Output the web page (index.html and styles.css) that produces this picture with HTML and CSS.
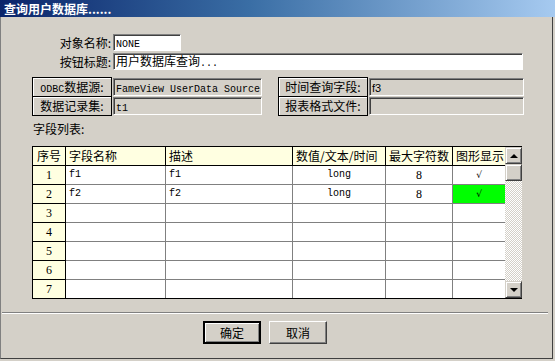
FILE: index.html
```html
<!DOCTYPE html>
<html lang="zh-CN">
<head>
  <meta charset="UTF-8">
  <title>查询用户数据库</title>
  <link rel="stylesheet" href="styles.css">
</head>
<body>
  <div class="window">
    <div class="titlebar">查询用户数据库......</div>
    <div class="client">
      <div class="row row-first">
        <span class="label">对象名称:</span>
        <div class="input input-short"><span class="mono">NONE</span></div>
      </div>
      <div class="row row-second">
        <span class="label">按钮标题:</span>
        <div class="input input-long">用户数据库查询<span class="mono">...</span></div>
      </div>

      <div class="info-grid">
        <div class="info-row">
          <div class="tag tag-left"><span class="mono">ODBC</span>数据源:</div>
          <div class="field field-left"><span class="mono">FameView UserData Source</span></div>
          <div class="tag tag-right">时间查询字段:</div>
          <div class="field field-right"><span class="sans">f3</span></div>
        </div>
        <div class="info-row info-row-second">
          <div class="tag tag-left">数据记录集:</div>
          <div class="field field-left"><span class="mono">t1</span></div>
          <div class="tag tag-right">报表格式文件:</div>
          <div class="field field-right"></div>
        </div>
      </div>

      <div class="list-title">字段列表:</div>

      <div class="grid-box">
        <table class="grid">
          <colgroup>
            <col class="c-no"><col class="c-name"><col class="c-desc"><col class="c-type"><col class="c-max"><col class="c-show">
          </colgroup>
          <thead>
            <tr>
              <th class="no">序号</th>
              <th>字段名称</th>
              <th>描述</th>
              <th>数值/文本/时间</th>
              <th>最大字符数</th>
              <th>图形显示</th>
            </tr>
          </thead>
          <tbody>
            <tr><td class="no num">1</td><td class="mono">f1</td><td class="mono">f1</td><td class="mono mid">long</td><td class="num mid">8</td><td class="mid check">√</td></tr>
            <tr><td class="no num">2</td><td class="mono">f2</td><td class="mono">f2</td><td class="mono mid">long</td><td class="num mid">8</td><td class="mid check green">√</td></tr>
            <tr><td class="no num">3</td><td></td><td></td><td></td><td></td><td></td></tr>
            <tr><td class="no num">4</td><td></td><td></td><td></td><td></td><td></td></tr>
            <tr><td class="no num">5</td><td></td><td></td><td></td><td></td><td></td></tr>
            <tr><td class="no num">6</td><td></td><td></td><td></td><td></td><td></td></tr>
            <tr><td class="no num">7</td><td></td><td></td><td></td><td></td><td></td></tr>
          </tbody>
        </table>
        <div class="scrollbar">
          <div class="sb-btn"><span class="arrow-up"></span></div>
          <div class="sb-thumb"></div>
          <div class="sb-track"></div>
          <div class="sb-btn"><span class="arrow-down"></span></div>
        </div>
      </div>

      <div class="separator"></div>

      <div class="buttons">
        <button class="btn btn-default">确定</button>
        <button class="btn">取消</button>
      </div>
    </div>
  </div>
</body>
</html>
```

FILE: styles.css
```css
body {
  margin: 0;
  padding: 0;
  background-color: #d4d0c8;
  font-family: "Noto Sans CJK SC", "DejaVu Sans", sans-serif;
  font-size: 12px;
  color: #000;
}
.window {
  width: 555px;
  height: 361px;
  background-color: #d4d0c8;
  overflow: hidden;
}
.titlebar {
  height: 17px;
  line-height: 17px;
  padding-left: 4px;
  color: #fff;
  font-weight: bold;
  background: linear-gradient(to right, #0a246a 0%, #3a6ea5 45%, #a6caf0 100%);
  box-sizing: border-box;
}
.client {
  width: 553px;
  height: 342px;
  box-sizing: border-box;
  border-left: 1px solid #808080;
  border-right: 1px solid #404040;
  border-bottom: 1px solid #404040;
  display: flex;
  flex-direction: column;
}
.mono {
  font-family: "Liberation Mono", "DejaVu Sans Mono", monospace;
  font-size: 10px;
}
.sans {
  font-family: "Liberation Sans", sans-serif;
  font-size: 11px;
}

/* top form rows */
.row {
  display: flex;
  align-items: center;
  height: 17px;
}
.row-first { margin-top: 17px; }
.row-second { margin-top: 2px; }
.label {
  width: 112px;
  text-align: right;
  padding-right: 2px;
  box-sizing: border-box;
}
.input {
  height: 17px;
  box-sizing: border-box;
  background-color: #fff;
  border: 1px solid;
  border-color: #808080 #fff #fff #808080;
  box-shadow: inset 1px 1px #404040;
  padding: 0 2px;
  line-height: 14px;
  white-space: nowrap;
  overflow: hidden;
}
.input-short { width: 68px; }
.input-long { width: 410px; }

/* ODBC info block */
.info-grid {
  margin-top: 7px;
  margin-left: 31px;
}
.info-row {
  display: flex;
  height: 20px;
}
.info-row-second { margin-top: -1px; }
.tag {
  height: 20px;
  box-sizing: border-box;
  border: 1px solid #000;
  box-shadow: inset 1px 1px #fff;
  text-align: center;
  line-height: 18px;
  white-space: nowrap;
}
.tag-left { width: 80px; }
.tag-right { width: 90px; margin-left: 16px; }
.field {
  height: 18px;
  margin-top: 1px;
  margin-left: 1px;
  box-sizing: border-box;
  border: 1px solid;
  border-color: #808080 #fff #fff #808080;
  box-shadow: inset 1px 1px #404040;
  padding: 0 2px;
  line-height: 16px;
  white-space: nowrap;
  overflow: hidden;
}
.field-left { width: 149px; }
.field-right { width: 155px; }

.list-title {
  margin-top: 5px;
  margin-left: 32px;
  height: 16px;
  line-height: 16px;
}

/* field grid */
.grid-box {
  margin-top: 9px;
  margin-left: 31px;
  width: 490px;
  height: 153px;
  display: flex;
  box-sizing: border-box;
}
.grid {
  width: 473px;
  border-collapse: separate;
  border-spacing: 0;
  table-layout: fixed;
  border-top: 1px solid #000;
  border-left: 1px solid #000;
  border-bottom: 1px solid #000;
  background-color: #fff;
  height: 153px;
}
.c-no { width: 33px; }
.c-name { width: 100px; }
.c-desc { width: 127px; }
.c-type { width: 93px; }
.c-max { width: 67px; }
.c-show { width: 52px; }
.grid th, .grid td {
  height: 18px;
  padding: 0 0 0 3px;
  border-right: 1px solid #808080;
  border-bottom: 1px solid #808080;
  text-align: left;
  font-weight: normal;
  white-space: nowrap;
  overflow: hidden;
  line-height: 18px;
}
.grid th {
  background-color: #ffffe1;
  border-right-color: #000;
  border-bottom-color: #000;
}
.grid th:last-child { border-right: none; }
.grid td:last-child { border-right: none; }
.grid tbody tr:last-child td { border-bottom: none; }
.grid .no {
  background-color: #ffffe1;
  text-align: center;
  padding: 0;
  border-right-color: #000;
  border-bottom-color: #000;
}
.grid .num {
  font-family: "Liberation Serif", serif;
  font-size: 12px;
}
.grid .mid {
  text-align: center;
  padding: 0;
}
.grid .check {
  font-family: "DejaVu Sans", sans-serif;
  font-size: 9px;
}
.grid .green {
  background-color: #00ff00;
}

.scrollbar {
  width: 17px;
  height: 153px;
  display: flex;
  flex-direction: column;
  border-top: 1px solid #000;
  border-bottom: 1px solid #000;
  box-sizing: border-box;
}
.sb-btn, .sb-thumb {
  height: 17px;
  flex: none;
  box-sizing: border-box;
  background-color: #d4d0c8;
  border: 1px solid;
  border-color: #d4d0c8 #404040 #404040 #d4d0c8;
  box-shadow: inset 1px 1px #fff, inset -1px -1px #808080;
  display: flex;
  align-items: center;
  justify-content: center;
}
.sb-track {
  flex: 1;
  background-color: #e8e6e1;
  background-image: repeating-conic-gradient(#d4d0c8 0 25%, #fff 0 50%);
  background-size: 2px 2px;
}
.arrow-up {
  width: 0;
  height: 0;
  border-left: 4px solid transparent;
  border-right: 4px solid transparent;
  border-bottom: 4px solid #000;
}
.arrow-down {
  width: 0;
  height: 0;
  border-left: 4px solid transparent;
  border-right: 4px solid transparent;
  border-top: 4px solid #000;
}

.separator {
  margin-top: 13px;
  margin-left: 1px;
  width: 546px;
  height: 1px;
  background-color: #808080;
  border-bottom: 1px solid #fff;
}

.buttons {
  display: flex;
  gap: 8px;
  margin-top: 7px;
  margin-left: 202px;
}
.btn {
  width: 58px;
  height: 23px;
  padding: 0;
  margin: 0;
  font-family: "Noto Sans CJK SC", sans-serif;
  font-size: 12px;
  background-color: #d4d0c8;
  border: 1px solid;
  border-color: #fff #404040 #404040 #fff;
  box-shadow: inset -1px -1px #808080;
  color: #000;
}
.btn-default {
  border: 2px solid #000;
  box-shadow: inset 1px 1px #fff, inset -1px -1px #808080;
}
```
